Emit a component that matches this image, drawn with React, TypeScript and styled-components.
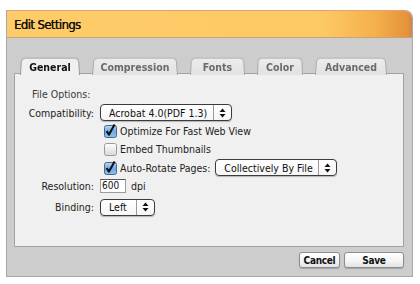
import styled, { createGlobalStyle } from 'styled-components'

const GlobalStyle = createGlobalStyle`
  html, body {
    margin: 0;
    padding: 0;
    background: #fff;
  }
  body {
    font-family: "DejaVu Sans Condensed", "DejaVu Sans", sans-serif;
    color: #222;
  }
`

const Window = styled.div`
  margin: 10px 7px 7px 6px;
  width: 407px;
  height: 267px;
  box-sizing: border-box;
  display: flex;
  flex-direction: column;
  background: #cdcdcd;
  border: 1px solid #a8a8a8;
  border-top: none;
  border-radius: 0 8px 0 0;
  overflow: hidden;
`

const TitleBar = styled.div`
  height: 28px;
  flex: none;
  box-sizing: border-box;
  display: flex;
  align-items: center;
  padding-left: 7px;
  background: linear-gradient(to right, #fdcc69 0%, #fdc965 78%, #f4b04b 91%, #e5923b 99%, #d2834a 100%);
  border-top: 1px solid #e4a274;
  border-bottom: 1px solid #c9a27a;
  border-radius: 0 8px 0 0;
`

const Title = styled.span`
  font-family: "DejaVu Sans Condensed", sans-serif;
  font-size: 13px;
  font-weight: normal;
  color: #141008;
  letter-spacing: -0.6px;
  text-shadow: 0.3px 0 0 #141008;
`

const Body = styled.div`
  flex: 1;
  display: flex;
  flex-direction: column;
  padding: 19px 8px 8px 7px;
`

const TabRow = styled.div`
  display: flex;
  height: 17px;
  padding-left: 6px;
  gap: 12px;
  position: relative;
  z-index: 1;
  margin-bottom: -1px;
`

const Tab = styled.div<{ $active?: boolean; $w: number }>`
  position: relative;
  width: ${p => p.$w}px;
  height: 18px;
  display: flex;
  align-items: center;
  justify-content: center;
  font-family: "DejaVu Sans Condensed", sans-serif;
  font-size: 10.5px;
  font-weight: bold;
  color: ${p => (p.$active ? '#111' : '#6a6a6a')};
  padding-top: 2px;
  box-sizing: border-box;
  z-index: ${p => (p.$active ? 2 : 0)};

  &::before {
    content: '';
    position: absolute;
    inset: 0;
    background: ${p => (p.$active ? '#f0f0f0' : 'linear-gradient(#ececec, #e2e2e2)')};
    border: 1px solid ${p => (p.$active ? '#9a9a9a' : '#a9a9a9')};
    border-bottom: none;
    border-radius: 5px 5px 0 0;
    transform: perspective(14px) rotateX(1.6deg);
    transform-origin: bottom;
    z-index: -1;
  }
`

const Panel = styled.div`
  height: 174px;
  box-sizing: border-box;
  background: #f0f0f0;
  border: 1px solid #a2a2a2;
  padding: 11px 0 0 3px;
`

const Form = styled.div`
  display: grid;
  grid-template-columns: 76px auto;
  grid-template-rows: repeat(6, 18.4px) 24px;
  column-gap: 6px;
  align-items: center;
  font-size: 10.5px;
`

const Section = styled.div`
  grid-column: 1 / span 2;
  padding-left: 14px;
  color: #3a3a3a;
`

const Label = styled.div`
  grid-column: 1;
  text-align: right;
  white-space: nowrap;
  color: #222;
`

const Control = styled.div<{ $indent?: number }>`
  grid-column: 2;
  display: flex;
  align-items: center;
  gap: 5px;
  white-space: nowrap;
  padding-left: ${p => p.$indent ?? 0}px;
`

const SelectBox = styled.div<{ $w: number }>`
  width: ${p => p.$w}px;
  height: 17px;
  box-sizing: border-box;
  display: flex;
  align-items: center;
  background: linear-gradient(#ffffff, #f6f6f6);
  border: 1px solid #3c3c3c;
  border-radius: 4px;
  box-shadow: 0 1px 1px rgba(0, 0, 0, 0.25);
  font-size: 10.5px;
  color: #111;
`

const SelectText = styled.span`
  flex: 1;
  padding-left: 8px;
  overflow: hidden;
`

const SelectArrow = styled.span`
  width: 17px;
  height: 100%;
  display: flex;
  align-items: center;
  justify-content: center;
  border-left: 1px solid #9a9a9a;
`

const CheckLabel = styled.label`
  display: flex;
  align-items: center;
  gap: 3px;
  font-size: 10.5px;
  color: #222;
`

const NumberInput = styled.div`
  width: 26px;
  height: 14px;
  box-sizing: border-box;
  background: #fff;
  border: 1px solid #9c9c9c;
  border-top-color: #555;
  font-size: 10px;
  line-height: 12px;
  padding-left: 1px;
  color: #111;
`

const Footer = styled.div`
  display: flex;
  justify-content: flex-end;
  gap: 4px;
  margin-top: 5px;
`

const Button = styled.div<{ $w: number }>`
  width: ${p => p.$w}px;
  height: 16px;
  box-sizing: border-box;
  display: flex;
  align-items: center;
  justify-content: center;
  background: linear-gradient(#ffffff, #f3f3f3 60%, #e2e2e2);
  border: 1px solid #8c8c8c;
  border-radius: 3px;
  box-shadow: 0 1px 1px rgba(0, 0, 0, 0.2);
  font-family: "DejaVu Sans Condensed", sans-serif;
  font-size: 10px;
  font-weight: bold;
  letter-spacing: -0.3px;
  color: #111;
`

const Arrows = () => (
  <svg width="7" height="10" viewBox="0 0 7 10">
    <path d="M3.5 0.5 L6.5 4 L0.5 4 Z" fill="#111" />
    <path d="M3.5 9.5 L6.5 6 L0.5 6 Z" fill="#111" />
  </svg>
)

const Checkbox = ({ checked }: { checked?: boolean }) => (
  <svg width="13" height="14" viewBox="0 0 13 14" style={{ flex: 'none' }}>
    <defs>
      <linearGradient id="cbOn" x1="0" y1="0" x2="0" y2="1">
        <stop offset="0" stopColor="#b8d8f6" />
        <stop offset="0.5" stopColor="#6fa9e4" />
        <stop offset="1" stopColor="#8cc2f2" />
      </linearGradient>
      <linearGradient id="cbOff" x1="0" y1="0" x2="0" y2="1">
        <stop offset="0" stopColor="#ffffff" />
        <stop offset="1" stopColor="#d8d8d8" />
      </linearGradient>
    </defs>
    <rect
      x="0.5"
      y="1.5"
      width="12"
      height="12"
      rx="2"
      fill={checked ? 'url(#cbOn)' : 'url(#cbOff)'}
      stroke={checked ? '#46688f' : '#9a9a9a'}
    />
    {checked && (
      <path d="M2.6 7.2 L5 10.6 L10.6 0.6" fill="none" stroke="#111" strokeWidth="2.1" strokeLinejoin="round" />
    )}
  </svg>
)

const Select = ({ w, value }: { w: number; value: string }) => (
  <SelectBox $w={w}>
    <SelectText>{value}</SelectText>
    <SelectArrow>
      <Arrows />
    </SelectArrow>
  </SelectBox>
)

const tabs = [
  { name: 'General', w: 60, active: true },
  { name: 'Compression', w: 86 },
  { name: 'Fonts', w: 55 },
  { name: 'Color', w: 46 },
  { name: 'Advanced', w: 72 },
]

export default function App() {
  return (
    <>
      <GlobalStyle />
      <Window>
        <TitleBar>
          <Title>Edit Settings</Title>
        </TitleBar>
        <Body>
          <TabRow>
            {tabs.map(t => (
              <Tab key={t.name} $w={t.w} $active={t.active}>
                {t.name}
              </Tab>
            ))}
          </TabRow>
          <Panel>
            <Form>
              <Section>File Options:</Section>
              <Label>Compatibility:</Label>
              <Control>
                <Select w={132} value="Acrobat 4.0(PDF 1.3)" />
              </Control>
              <Control $indent={4}>
                <CheckLabel>
                  <Checkbox checked />
                  Optimize For Fast Web View
                </CheckLabel>
              </Control>
              <Control $indent={4}>
                <CheckLabel>
                  <Checkbox />
                  Embed Thumbnails
                </CheckLabel>
              </Control>
              <Control $indent={4}>
                <CheckLabel>
                  <Checkbox checked />
                  Auto-Rotate Pages:
                </CheckLabel>
                <Select w={122} value="Collectively By File" />
              </Control>
              <Label>Resolution:</Label>
              <Control $indent={0}>
                <NumberInput>600</NumberInput>
                <span>dpi</span>
              </Control>
              <Label>Binding:</Label>
              <Control>
                <Select w={55} value="Left" />
              </Control>
            </Form>
          </Panel>
          <Footer>
            <Button $w={41}>Cancel</Button>
            <Button $w={60}>Save</Button>
          </Footer>
        </Body>
      </Window>
    </>
  )
}
